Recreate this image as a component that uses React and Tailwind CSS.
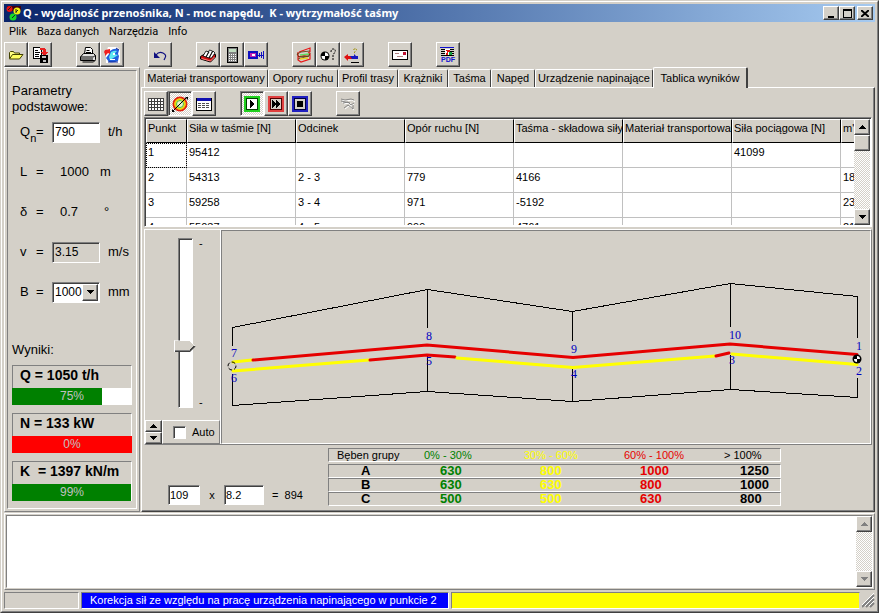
import React, { useState } from "react";

const raised =
  "border border-t-white border-l-white border-r-[#404040] border-b-[#404040] bg-[#d4d0c8] shadow-[inset_-1px_-1px_0_#808080]";
const sunken =
  "border border-t-[#808080] border-l-[#808080] border-r-white border-b-white shadow-[inset_1px_1px_0_#404040]";
const thinSunken =
  "border border-t-[#808080] border-l-[#808080] border-r-white border-b-white";
const thinRaised =
  "border border-t-white border-l-white border-r-[#808080] border-b-[#808080]";
const dither =
  "bg-[repeating-conic-gradient(#ffffff_0_25%,#d4d0c8_0_50%)] bg-[length:2px_2px]";

function Icon({ children, smooth }) {
  return (
    <svg width="16" height="16" viewBox="0 0 16 16" fill="none" aria-hidden="true" shapeRendering={smooth ? "auto" : "crispEdges"}>
      {children}
    </svg>
  );
}

const icons = {
  open: (
    <Icon smooth>
      <path d="M1.5 11.5v-6l1-1h3l1 1.5h5v2" fill="#ffff80" stroke="#404000" />
      <path d="M1.5 12l3-4.5h10.5l-3.5 4.5z" fill="#ffff60" stroke="#404000" />
    </Icon>
  ),
  export: (
    <Icon>
      <path d="M1.5 .5h6l2 2v9h-8z" fill="#fff" stroke="#000" />
      <path d="M3 3.5h3M3 5.5h5M3 7.5h4M3 9.5h4" stroke="#000" />
      <path d="M8 1h4l2 2v2h2l-4 4-3-4h2V3H8z" fill="#e82020" />
      <path d="M8 8h8v8H8z" fill="#000" />
      <path d="M10 9h4v2h-4zM11 13h3v2h-3z" fill="#c0c0c0" />
    </Icon>
  ),
  print: (
    <Icon smooth>
      <path d="M4.5 7l1-6.500h5l2 2V7" fill="#fff" stroke="#000" />
      <path d="M6.500 3.500h3M6 5.500h5" stroke="#000" />
      <path d="M.5 10l3-3.500h10l2 2v4l-1 1H.5z" fill="#e0e0e0" stroke="#000" />
      <path d="M.5 10h13l2-2M1 12h12M2.500 15h11l2-2" stroke="#000" />
    </Icon>
  ),
  sheet: (
    <Icon smooth>
      <path d="M4 0h9l3 3v13H2V6z" fill="#fff" />
      <path d="M6 4q5-4 9-1l-1 4 1 2-1 5q-4 2-9 1l-3-4 3-4z" fill="#2060e0" />
      <path d="M7 5q4-2 6-1l-3 3 4 1-3 2-5 3-1-3z" fill="#60e8f0" />
      <path d="M9 6h2v2H9zM6 12h5v1H6z" fill="#fff" />
      <path d="M1 3l5-1v5l-2-1-3 3V7L0 5z" fill="#f02020" />
      <path d="M12 1l3 2M4 15h10" stroke="#10208c" />
    </Icon>
  ),
  undo: (
    <Icon smooth>
      <path d="M4 8q3-4 7-2 4 2 2 5l-1 2" stroke="#101080" strokeWidth="1.2" />
      <path d="M2 5v6h6z" fill="#101080" />
    </Icon>
  ),
  cards: (
    <Icon smooth>
      <path d="M.5 9.500l5-3 10 1v2.500l-5 5-10-3z" fill="#d01010" stroke="#000" />
      <path d="M3 9l3-5 3 1-3 5zM6 10l3.500-7 3 1-3.500 7zM9 11l4-7 2 2-3.500 5z" fill="#fff" stroke="#000" strokeWidth=".8" />
      <path d="M1.500 11.500l9 2.500 4-4" stroke="#ff8080" />
    </Icon>
  ),
  calc: (
    <Icon>
      <path d="M3.500 .5h10v15h-10z" fill="#808080" stroke="#000" />
      <path d="M5 2h7v3H5z" fill="#c0dcc0" />
      <path d="M5 7.500h7M5 9.500h7M5 11.500h7M5 13.500h7" stroke="#fff" strokeDasharray="1 1" />
    </Icon>
  ),
  motor: (
    <Icon>
      <path d="M1 5h8v6H1z" fill="#c020b0" stroke="#1010c0" strokeWidth="2" />
      <path d="M4 7h3v2H4z" fill="#fff" />
      <path d="M9 8h7M11.500 6v4M13.500 5v6M15.500 4v8" stroke="#1010c0" />
    </Icon>
  ),
  belt: (
    <Icon smooth>
      <path d="M3 5l11-4v4l-2 1M2 10l12-3v5l-9 3-3-2V5" stroke="#e81818" strokeWidth="1.2" />
      <path d="M1 7l4-2 9-1M1 7l2 3 10-1 1-3M2 12l11-3" stroke="#503000" strokeWidth=".8" />
      <path d="M4 8l9-1" stroke="#60e060" strokeWidth="1.5" />
      <path d="M4 12l8-1" stroke="#f0d020" strokeWidth="1.500" />
    </Icon>
  ),
  drum: (
    <Icon smooth>
      <circle cx="5" cy="9" r="4.500" fill="#000" />
      <path d="M5 9V5.500A3.500 3.500 0 018.500 9zM5 9v3.500A3.500 3.500 0 011.500 9z" fill="#fff" />
      <path d="M11 5q0-3 2-3 3 0 2 3l-2 3v2M13 11v2" stroke="#000" strokeDasharray="2 1" />
    </Icon>
  ),
  airplane: (
    <Icon smooth>
      <path d="M0 10l4-3v2h4v3H4v2z" fill="#e01010" />
      <path d="M6 9h4V7l2 2h2v3H8z" fill="#1818c0" />
      <path d="M7 15.500h8" stroke="#000" />
      <path d="M9.500 3q2-3 3 0l-2 2v2" stroke="#a09000" strokeDasharray="2 1" />
    </Icon>
  ),
  mail: (
    <Icon>
      <path d="M.5 3.500h15v9H.5z" fill="#fff" stroke="#000" />
      <path d="M3 6.500h4M5 9.500h6" stroke="#b08080" />
      <path d="M11 5h3v3h-3z" fill="#c01030" />
    </Icon>
  ),
  pdf: (
    <Icon>
      <path d="M0 .5h14" stroke="#1010d0" />
      <path d="M1 2.500h13M1 4.500h13M1 6.500h13M1 8.500h13" stroke="#000" />
      <path d="M5 2h5v6H5z" fill="#fff" />
      <path d="M6 3h4v2H8v3H6V6h1V4H6z" fill="#e01010" />
      <path d="M9 5h3v3H9z" fill="#10a040" />
      <text x="1" y="15" fontSize="7" fontWeight="bold" fontFamily='"Liberation Sans", sans-serif' fill="#1010d0">PDF</text>
    </Icon>
  ),
  grid: (
    <Icon>
      <path d="M0 2h16v13H0z" fill="#fff" />
      <path d="M0 2.500h16M0 5.500h16M0 8.500h16M0 11.500h16M0 14.500h16M.5 2v13M3.500 2v13M6.500 2v13M9.500 2v13M12.500 2v13M15.500 2v13" stroke="#404040" />
    </Icon>
  ),
  rings: (
    <Icon smooth>
      <circle cx="8" cy="8" r="6.500" fill="#e8e060" stroke="#e02010" strokeWidth="2" />
      <circle cx="8" cy="8" r="5" stroke="#f0d000" strokeWidth="1.500" />
      <circle cx="8" cy="8" r="3.500" fill="#f0f0c8" stroke="#40c040" />
      <path d="M1 15L15 1" stroke="#000" />
      <path d="M13 1h3v3zM0 13v3h3z" fill="#000" />
    </Icon>
  ),
  table: (
    <Icon>
      <path d="M.5 2.500h15v12H.5z" fill="#fff" stroke="#000" />
      <path d="M1 2h14v3H1z" fill="#1010b0" />
      <path d="M2 7.500h12M2 9.500h12M2 11.500h12" stroke="#505050" strokeDasharray="3 1" />
    </Icon>
  ),
  play: (
    <Icon>
      <path d="M1 1h14v14H1z" fill="#fff" stroke="#20d020" strokeWidth="2" />
      <path d="M2.500 2.500h11v11h-11z" stroke="#004000" />
      <path d="M6 4v8l4-4z" fill="#000" />
    </Icon>
  ),
  forward: (
    <Icon>
      <path d="M1 1h14v14H1z" fill="#d4d0c8" stroke="#e04040" strokeWidth="2" />
      <path d="M2.500 2.500h11v11h-11z" stroke="#500000" />
      <path d="M4 4v8l4-4zM8 4v8l4-4z" fill="#000" />
    </Icon>
  ),
  stop: (
    <Icon>
      <path d="M1 1h14v14H1z" fill="#d4d0c8" stroke="#2020c0" strokeWidth="2" />
      <path d="M2.500 2.500h11v11h-11z" stroke="#000040" />
      <path d="M5 5h6v6H5z" fill="#000" />
    </Icon>
  ),
  disabled: (
    <Icon smooth>
      <path d="M2 4l4 1 6-1 3 2M4 8l5-1 2 3 3-2M5 13l4-3 5 4M2 6l9 2" stroke="#fff" />
      <path d="M1 3l4 1 6-1 3 1M3 7l5-1 3 3 3-2M4 12l4-3 5 4v-4M1 5l9 2" stroke="#808080" strokeWidth=".9" />
    </Icon>
  ),
};

function ToolButton({ icon, label, pressed, disabled }) {
  return (
    <button
      type="button"
      aria-label={label}
      aria-pressed={pressed}
      disabled={disabled}
      className={`flex h-[25px] w-6 shrink-0 items-center justify-center ${pressed ? `${sunken} ${dither}` : raised}`}
    >
      {icons[icon]}
    </button>
  );
}

function ToolGroups({ groups }) {
  return (
    <div className="flex gap-6">
      {groups.map((group, i) => (
        <div key={i} className="flex">
          {group.map((b) => (
            <ToolButton key={b.icon} {...b} />
          ))}
        </div>
      ))}
    </div>
  );
}

const mainTools = [
  [{ icon: "open", label: "Otwórz" }, { icon: "export", label: "Zapisz" }],
  [{ icon: "print", label: "Drukuj" }, { icon: "sheet", label: "Eksport" }],
  [{ icon: "undo", label: "Cofnij" }],
  [{ icon: "cards", label: "Baza danych" }, { icon: "calc", label: "Kalkulator" }, { icon: "motor", label: "Napęd" }],
  [{ icon: "belt", label: "Taśma" }, { icon: "drum", label: "Bęben" }, { icon: "airplane", label: "Kierunek" }],
  [{ icon: "mail", label: "Poczta" }],
  [{ icon: "pdf", label: "PDF" }],
];

const resultTools = [
  [{ icon: "grid", label: "Siatka" }, { icon: "rings", label: "Wykres", pressed: true }, { icon: "table", label: "Tabela" }],
  [{ icon: "play", label: "Start", pressed: true }, { icon: "forward", label: "Dalej" }, { icon: "stop", label: "Stop" }],
  [{ icon: "disabled", label: "Trasa", disabled: true }],
];

const tabs = [
  { name: "Materiał transportowany", width: "w-[124px]" },
  { name: "Opory ruchu", width: "w-[70px]" },
  { name: "Profil trasy", width: "w-[60px]" },
  { name: "Krążniki", width: "w-[50px]" },
  { name: "Taśma", width: "w-[43px]" },
  { name: "Napęd", width: "w-[44px]" },
  { name: "Urządzenie napinające", width: "w-[118px]" },
];

const columns = ["Punkt", "Siła w taśmie [N]", "Odcinek", "Opór ruchu [N]", "Taśma - składowa siły", "Materiał transportowany", "Siła pociągowa [N]", "m'"];
const rows = [
  ["1", "95412", "", "", "", "", "41099", ""],
  ["2", "54313", "2 - 3", "779", "4166", "", "", "18"],
  ["3", "59258", "3 - 4", "971", "-5192", "", "", "23"],
  ["4", "55037", "4 - 5", "999", "4761", "", "", "21"],
];

function Arrow({ up, muted }) {
  return (
    <svg width="7" height="4" viewBox="0 0 7 4" aria-hidden="true" shapeRendering="crispEdges">
      <path d={up ? "M0 4L3.500 0 7 4z" : "M0 0h7L3.500 4z"} fill={muted ? "#808080" : "#000"} />
    </svg>
  );
}

function ScrollBar({ muted, thumb }) {
  return (
    <div className={`flex w-4 shrink-0 flex-col ${dither}`}>
      <button type="button" aria-label="W górę" className={`flex h-4 items-center justify-center ${raised}`}>
        <Arrow up muted={muted} />
      </button>
      {thumb && <div className={`h-4 ${raised}`} />}
      <button type="button" aria-label="W dół" className={`mt-auto flex h-4 items-center justify-center ${raised}`}>
        <Arrow muted={muted} />
      </button>
    </div>
  );
}

function ResultsGrid() {
  return (
    <div className={`flex h-[110px] ${sunken} bg-white p-px`}>
      <div className="min-w-0 flex-1 overflow-hidden">
        <table className="w-[804px] table-fixed border-separate border-spacing-0 text-[11px] leading-[14px]">
          <thead>
            <tr>
              {columns.map((c, i) => (
                <th
                  key={c}
                  scope="col"
                  className={`h-6 overflow-hidden whitespace-nowrap border-r border-b border-t border-l border-t-white border-l-white border-r-black border-b-black bg-[#d4d0c8] px-px pt-px text-left align-top font-normal ${i === 0 ? "w-[41px]" : "w-[109px]"}`}
                >
                  {c}
                </th>
              ))}
            </tr>
          </thead>
          <tbody>
            {rows.map((r) => (
              <tr key={r[0]}>
                {r.map((v, i) => (
                  <td
                    key={i}
                    className={`h-[25px] px-0.5 pt-0.5 align-top border-r border-b border-[#c0c0c0] ${r[0] === "1" && i === 0 ? "outline outline-dotted outline-black -outline-offset-1" : ""}`}
                  >
                    {v}
                  </td>
                ))}
              </tr>
            ))}
          </tbody>
        </table>
      </div>
      <ScrollBar thumb />
    </div>
  );
}

const nodeLabels = [
  ["7", 231, 357], ["6", 231, 382], ["8", 426, 340], ["5", 426, 365], ["9", 571, 353],
  ["4", 571, 378], ["10", 729, 339], ["3", 729, 364], ["1", 856, 350], ["2", 856, 375],
];

function RouteChart() {
  return (
    <svg className="block h-full w-full" viewBox="222 231 648 212" preserveAspectRatio="none" role="img" aria-label="Profil trasy przenośnika">
      <g stroke="#000" fill="none" shapeRendering="crispEdges">
        <path d="M232.500 346V327.500L427.500 289.500L572.500 311.500L730.500 283.500L857.500 296.500V338" />
        <path d="M232.500 374V405.500L427.500 391.500L572.500 401.500L730.500 389.500L857.500 397.500V378" />
        <path d="M427.500 289V328M427.500 356V391M572.500 311V341M572.500 369V401M730.500 283V327M730.500 355V389" />
      </g>
      <g fill="none" strokeWidth="3" strokeLinecap="round">
        <path d="M233 362L252 360" stroke="#ffff00" />
        <path d="M253 360L427 345L573 357.500L730 344L857 354.500" stroke="#e60000" />
        <path d="M233 371L369 360" stroke="#ffff00" />
        <path d="M370 360L427 355L455 357" stroke="#e60000" />
        <path d="M457 358L573 367.500L715 356" stroke="#ffff00" />
        <path d="M716 356L729 353" stroke="#e60000" />
        <path d="M732 354L857 364.500" stroke="#ffff00" />
      </g>
      <circle cx="232" cy="366" r="4" fill="none" stroke="#000" strokeDasharray="4 2" />
      <circle cx="857" cy="359" r="4.500" fill="#000" />
      <path d="M857 359v-3a3 3 0 013 3zM857 359v3a3 3 0 01-3-3z" fill="#fff" />
      <g fill="#0000c0" fontSize="12" fontFamily='"Liberation Serif", serif'>
        {nodeLabels.map(([t, x, y]) => (
          <text key={t} x={x} y={y}>{t}</text>
        ))}
      </g>
    </svg>
  );
}

const drums = [
  ["A", "630", "800", "1000", "1250"],
  ["B", "630", "630", "800", "1000"],
  ["C", "500", "500", "630", "800"],
];
const drumColors = ["text-black", "text-[#008000]", "text-[#ffff00]", "text-[#e60000]", "text-black"];
const drumWidths = ["w-20", "w-[100px]", "w-[100px]", "w-[100px]", "w-[73px]"];

function DrumTable() {
  return (
    <table className="w-[453px] table-fixed border-separate border-spacing-0 text-left text-[11px] leading-3">
      <thead>
        <tr>
          {["Bęben grupy", "0% - 30%", "30% - 60%", "60% - 100%", "> 100%"].map((h, i) => (
            <th
              key={h}
              scope="col"
              className={`h-[14px] whitespace-nowrap border-y border-t-[#808080] border-b-white py-0 pr-0 font-normal ${drumColors[i]} ${drumWidths[i]} ${i === 0 ? "border-l border-l-[#808080] pl-2" : "pl-4"} ${i === 4 ? "border-r border-r-white" : ""}`}
            >
              {h}
            </th>
          ))}
        </tr>
      </thead>
      <tbody>
        <tr aria-hidden="true"><td className="h-0.5 p-0" colSpan={5} /></tr>
        {drums.map((r) => (
          <tr key={r[0]}>
            {r.map((v, i) => (
              <td
                key={i}
                className={`h-[14px] border-y border-t-[#808080] border-b-white py-0 pr-0 pl-8 text-[13px] font-bold leading-3 ${drumColors[i]} ${i === 0 ? "border-l border-l-[#808080]" : ""} ${i === 4 ? "border-r border-r-white" : ""}`}
              >
                {v}
              </td>
            ))}
          </tr>
        ))}
      </tbody>
    </table>
  );
}

function Param({ symbol, sub, htmlFor, unit, children }) {
  return (
    <div className="flex h-10 items-center pb-1.5 pl-2">
      <label htmlFor={htmlFor} className="flex w-8">
        <span className="w-4 whitespace-nowrap">
          {symbol}
          {sub && <sub className="-bottom-1.5 text-[11px]">{sub}</sub>}
        </span>
        =
      </label>
      {children}
      <span className={htmlFor ? "pl-2" : ""}>{unit}</span>
    </div>
  );
}

function Result({ label, percent, bar, fill }) {
  return (
    <div>
      <div className={`h-[23px] pl-[7px] text-[14px] font-bold leading-[18px] ${thinSunken} border-b-0 whitespace-pre`}>{label}</div>
      <div role="progressbar" aria-label={label} aria-valuenow={parseInt(percent)} className="relative h-[17px] bg-white">
        <div className={`h-full ${bar}`} style={{ width: fill }} />
        <span className="absolute inset-0 text-center text-[12px] leading-[17px] text-[#c0c0c0]">{percent}</span>
      </div>
    </div>
  );
}

function Sidebar() {
  const [flow, setFlow] = useState("790");
  return (
    <aside className={`flex w-[136px] shrink-0 p-0.5 ${thinRaised}`}>
      <div className={`flex flex-1 flex-col pr-1 pl-1 text-[13px] ${thinSunken}`}>
        <h2 className="pt-3 leading-4">Parametry<br />podstawowe:</h2>
        <Param symbol="Q" sub="n" htmlFor="flow" unit="t/h">
          <input id="flow" value={flow} onChange={(e) => setFlow(e.target.value)} className={`h-[21px] w-12 bg-white px-0.5 text-[12px] ${sunken}`} />
        </Param>
        <Param symbol="L" unit="m"><span className="w-12 pl-2">1000</span></Param>
        <Param symbol="δ" unit="°"><span className="w-[52px] pl-2">0.7</span></Param>
        <Param symbol="v" htmlFor="speed" unit="m/s">
          <input id="speed" readOnly value="3.15" className={`h-[21px] w-12 bg-[#d4d0c8] px-0.5 text-[12px] ${sunken}`} />
        </Param>
        <Param symbol="B" htmlFor="belt-width" unit="mm">
          <div className="relative">
            <select id="belt-width" defaultValue="1000" className={`block h-[21px] w-12 appearance-none bg-white px-0.5 text-[12px] ${sunken}`}>
              <option>800</option>
              <option>1000</option>
              <option>1200</option>
            </select>
            <span className={`pointer-events-none absolute inset-y-0.5 right-0.5 flex w-4 items-center justify-center ${raised}`}><Arrow /></span>
          </div>
        </Param>
        <h2 className="mt-auto leading-4">Wyniki:</h2>
        <div className="flex flex-col gap-2 py-[7px]">
          <Result label="Q = 1050 t/h" percent="75%" bar="bg-[#008000]" fill="75%" />
          <Result label="N = 133 kW" percent="0%" bar="bg-[#ff0000]" fill="100%" />
          <Result label="K  = 1397 kN/m" percent="99%" bar="bg-[#008000]" fill="99%" />
        </div>
      </div>
    </aside>
  );
}

function ScaleControls() {
  const [zoom, setZoom] = useState(65);
  return (
    <div className="flex min-h-0 w-[76px] shrink-0 flex-col border-r border-white">
      <div className="flex min-h-0 flex-1 pt-2 pb-3 pl-[33px]">
        <input
          type="range"
          aria-label="Skala"
          min="0"
          max="100"
          value={zoom}
          onChange={(e) => setZoom(e.target.value)}
          className={`h-full min-h-0 w-[15px] appearance-none bg-white [writing-mode:vertical-lr] ${sunken} [&::-webkit-slider-thumb]:-ml-0.5 [&::-webkit-slider-thumb]:h-3 [&::-webkit-slider-thumb]:w-[22px] [&::-webkit-slider-thumb]:appearance-none [&::-webkit-slider-thumb]:bg-no-repeat [&::-webkit-slider-thumb]:bg-[linear-gradient(to_top_right,#d4d0c8_35%,#ffffff_35%),linear-gradient(to_bottom_right,#d4d0c8_30%,#404040_30%),linear-gradient(#ffffff,#ffffff),linear-gradient(#ffffff_1px,#d4d0c8_1px,#d4d0c8_10px,#808080_10px,#808080_11px,#404040_11px)] [&::-webkit-slider-thumb]:bg-[position:right_top,right_bottom,left_top,left_top] [&::-webkit-slider-thumb]:bg-[size:6px_6px,6px_6px,1px_12px,16px_12px] [&::-webkit-slider-thumb]:[clip-path:polygon(0_0,16px_0,100%_50%,16px_100%,0_100%)]`}
        />
        <div className="flex flex-col justify-between pl-1.5 text-[11px] leading-[11px]">
          <span>-</span>
          <span>-</span>
        </div>
      </div>
      <div className="flex h-6 shrink-0">
        <div className="flex w-[17px] flex-col">
          <button type="button" aria-label="Więcej" className={`flex h-3 items-center justify-center ${raised}`}><Arrow up /></button>
          <button type="button" aria-label="Mniej" className={`flex h-3 items-center justify-center ${raised}`}><Arrow /></button>
        </div>
        <label className={`flex flex-1 items-center gap-1.5 pl-2.5 text-[11px] ${thinRaised}`}>
          <input type="checkbox" className={`h-[13px] w-[13px] appearance-none bg-white ${sunken}`} />
          Auto
        </label>
      </div>
    </div>
  );
}

function AppLogo() {
  return (
    <svg width="16" height="16" viewBox="0 0 16 16" className="mr-px" aria-hidden="true">
      <path d="M1 1h14v5H1z" fill="#400010" />
      <circle cx="3.500" cy="4" r="3" fill="#e81010" />
      <circle cx="11" cy="6" r="3.500" fill="#f0f010" />
      <circle cx="7" cy="12" r="3.500" fill="#18d828" />
      <path d="M2 5l3-3M10 4v4M12 5l-2 2M6 13l3-3" stroke="#202020" />
    </svg>
  );
}

function TitleBar() {
  const control = `flex h-[14px] w-4 items-center justify-center ${raised}`;
  return (
    <header className="flex h-[18px] items-center bg-linear-to-r from-[#0a246a] to-[#a6caf0] pr-0.5 pl-0.5">
      <AppLogo />
      <h1 className="flex-1 whitespace-pre font-['Noto_Sans',sans-serif] text-[11px] font-bold leading-[18px] text-white">
        Q - wydajność przenośnika, N - moc napędu,  K - wytrzymałość taśmy
      </h1>
      <button type="button" aria-label="Minimalizuj" className={control}>
        <svg width="9" height="9" aria-hidden="true"><path d="M1 7h6v2H1z" /></svg>
      </button>
      <button type="button" aria-label="Maksymalizuj" className={control}>
        <svg width="9" height="9" aria-hidden="true"><path d="M0 0h9v9H0zM1 2v6h7V2z" fillRule="evenodd" /></svg>
      </button>
      <button type="button" aria-label="Zamknij" className={`${control} ml-0.5`}>
        <svg width="8" height="7" aria-hidden="true"><path d="M0 0l8 7M8 0L0 7" stroke="#000" strokeWidth="2" /></svg>
      </button>
    </header>
  );
}

export default function App() {
  return (
    <div className="flex h-screen flex-col overflow-hidden border border-t-[#d4d0c8] border-l-[#d4d0c8] border-r-[#404040] border-b-[#404040] bg-[#d4d0c8] font-['Liberation_Sans',Arial,sans-serif] text-[11px] text-black">
      <div className={`flex min-h-0 flex-1 flex-col p-0.5 ${thinRaised}`}>
        <TitleBar />
        <nav className="flex h-5 items-center gap-2.5 px-[5px] font-['Roboto',sans-serif] text-[11px]">
          {["Plik", "Baza danych", "Narzędzia", "Info"].map((m) => (
            <button key={m} type="button">{m}</button>
          ))}
        </nav>
        <ToolGroups groups={mainTools} />
        <main className="flex min-h-0 flex-1 gap-px">
          <Sidebar />
          <section className="flex min-w-0 flex-1 flex-col">
            <div role="tablist" className="flex h-5 items-end pl-[3px]">
              {tabs.map((t) => (
                <button key={t.name} type="button" role="tab" aria-selected="false" className={`h-[18px] shrink-0 whitespace-nowrap rounded-t-xs border-t border-r border-l border-t-white border-l-white border-r-[#404040] ${t.width}`}>
                  {t.name}
                </button>
              ))}
              <button type="button" role="tab" aria-selected="true" className="relative z-10 -mb-px h-[21px] w-[95px] shrink-0 whitespace-nowrap rounded-t-xs border-t border-r-2 border-l border-t-white border-l-white border-r-[#404040] bg-[#d4d0c8]">
                Tablica wyników
              </button>
            </div>
            <div role="tabpanel" className={`flex min-h-0 flex-1 flex-col px-0.5 pt-[3px] ${raised}`}>
              <ToolGroups groups={resultTools} />
              <div className="pt-px pb-0.5"><ResultsGrid /></div>
              <div className={`flex min-h-0 flex-1 ${thinRaised}`}>
                <ScaleControls />
                <div className={`min-h-0 min-w-0 flex-1 ${thinSunken}`}><RouteChart /></div>
              </div>
              <div className="flex h-[66px] shrink-0 items-start pt-[3px] pl-6">
                <div className="flex w-40 items-center pt-[37px] text-[11px]">
                  <input aria-label="Liczba" defaultValue="109" className={`h-5 w-8 bg-white px-px ${sunken}`} />
                  <span className="w-6 text-center">x</span>
                  <input aria-label="Mnożnik" defaultValue="8.2" className={`h-5 w-10 bg-white px-px ${sunken}`} />
                  <output className="pl-2">=&nbsp; 894</output>
                </div>
                <DrumTable />
              </div>
            </div>
          </section>
        </main>
        <div className={`mt-px flex h-[77px] shrink-0 p-px ${thinRaised}`}>
          <div className={`flex flex-1 bg-white ${sunken}`}>
            <textarea aria-label="Komunikaty" className="min-w-0 flex-1 resize-none bg-white" />
            <ScrollBar muted />
          </div>
        </div>
        <footer className="mt-0.5 flex h-[17px] shrink-0 gap-0.5 leading-[15px]">
          <div className={`w-[75px] ${thinSunken}`} />
          <div className={`w-[368px] whitespace-nowrap bg-[#0000ff] pl-2 text-[11px] text-white ${thinSunken}`}>
            Korekcja sił ze względu na pracę urządzenia napinającego w punkcie 2
          </div>
          <div className="flex-1 border border-t-[#808080] border-l-[#808080] border-r-[#d4d0c8] border-b-white bg-[#ffff00]" />
          <svg width="13" height="16" aria-hidden="true">
            <path d="M0 15L12 3M4 15l8-8M8 15l4-4" stroke="#808080" strokeWidth="2" />
            <path d="M-1 14L12 1M3 14l9-9M7 14l5-5" stroke="#fff" />
          </svg>
        </footer>
      </div>
    </div>
  );
}
